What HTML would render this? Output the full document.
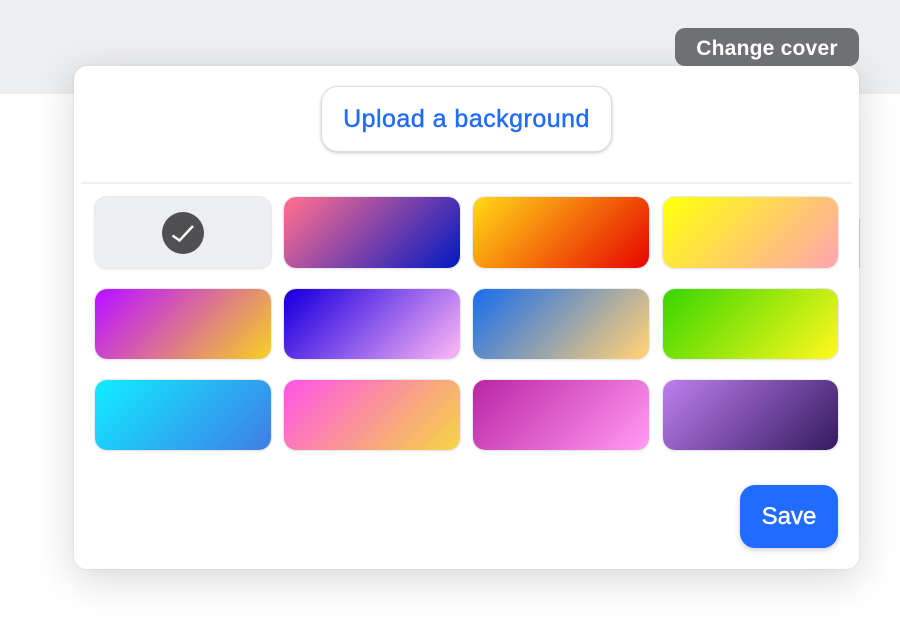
<!DOCTYPE html>
<html>
<head>
<meta charset="utf-8">
<style>
html,body{margin:0;padding:0;width:900px;height:630px;overflow:hidden;background:#fff;font-family:"Liberation Sans",sans-serif}
.abs{position:absolute;box-sizing:border-box}
.cover{left:0;top:0;width:900px;height:94px;background:#edeef0}
.change{left:675px;top:28px;width:184px;height:38px;background:#6f7073;border-radius:10px;color:#fff;font-weight:bold;font-size:21px;line-height:41px;text-align:center;white-space:nowrap;letter-spacing:.22px}
.sliver{left:859px;top:219px;width:1px;height:49px;background:#d8d8da}
.card{left:74px;top:66px;width:785px;height:503px;background:#fff;border-radius:13px;box-shadow:0 0 2px rgba(0,0,0,.1),0 10px 40px rgba(0,0,0,.16)}
.upload{left:321px;top:86px;width:291px;height:66px;background:#fff;border:1.5px solid #dcdde0;border-radius:17px;box-shadow:0 1px 3px rgba(0,0,0,.22);color:#216cff;font-size:25px;line-height:65px;letter-spacing:.48px;text-align:center;white-space:nowrap;-webkit-text-stroke:.45px #216cff}
.hr{left:81px;top:182px;width:771px;height:2px;background:#eeeff1}
.t{width:178px;height:72px;border:1px solid #e8e9ec;border-radius:13px;box-shadow:0 1px 2px rgba(0,0,0,.06)}
.c4{width:177px}
.r1{top:196px;height:73px}
.r2{top:288px}
.r3{top:379px}
.save{left:740px;top:485px;width:98px;height:63px;background:#216cff;border-radius:15px;box-shadow:0 2px 6px rgba(0,0,0,.2);color:#fff;font-size:24px;line-height:64px;text-align:center;-webkit-text-stroke:.45px #fff}
</style>
</head>
<body>
<div class="abs cover"></div>
<div class="abs sliver"></div>
<div class="abs card"></div>
<div class="abs change">Change cover</div>
<div class="abs upload">Upload a background</div>
<div class="abs hr"></div>

<div class="abs t r1" style="left:94px;background:#edeef0"></div>
<svg class="abs" style="left:161px;top:211px" width="44" height="44" viewBox="0 0 44 44"><circle cx="22" cy="22" r="21" fill="#505053"/><path d="M11.500 24.500L18.500 29.500L32 15" fill="none" stroke="#fff" stroke-width="2.400"/></svg>
<div class="abs t r1" style="left:283px;background:linear-gradient(135deg,#f96c90 5%,#0d1dbf 95%) padding-box,#e8e9ec"></div>
<div class="abs t r1" style="left:472px;background:linear-gradient(135deg,#ffd016 5%,#e80f00 95%) padding-box,#e8e9ec"></div>
<div class="abs t r1 c4" style="left:662px;background:linear-gradient(135deg,#ffff10 5%,#ffa8a8 95%) padding-box,#e8e9ec"></div>

<div class="abs t r2" style="left:94px;background:linear-gradient(135deg,#bd16ff 5%,#f5c82c 95%) padding-box,#e8e9ec"></div>
<div class="abs t r2" style="left:283px;background:linear-gradient(135deg,#1f00e0 5%,#f5b0f5 95%) padding-box,#e8e9ec"></div>
<div class="abs t r2" style="left:472px;background:linear-gradient(135deg,#2272e6 5%,#fbcf78 95%) padding-box,#e8e9ec"></div>
<div class="abs t r2 c4" style="left:662px;background:linear-gradient(135deg,#40d800 5%,#f9f71c 95%) padding-box,#e8e9ec"></div>

<div class="abs t r3" style="left:94px;background:linear-gradient(135deg,#12e8ff 5%,#3d82e6 95%) padding-box,#e8e9ec"></div>
<div class="abs t r3" style="left:283px;background:linear-gradient(135deg,#ff5ae0 5%,#f6d04a 95%) padding-box,#e8e9ec"></div>
<div class="abs t r3" style="left:472px;background:linear-gradient(135deg,#bd2aa8 5%,#ff96f0 95%) padding-box,#e8e9ec"></div>
<div class="abs t r3 c4" style="left:662px;background:linear-gradient(135deg,#b87ae8 5%,#3a1f66 95%) padding-box,#e8e9ec"></div>

<div class="abs save">Save</div>
</body>
</html>
